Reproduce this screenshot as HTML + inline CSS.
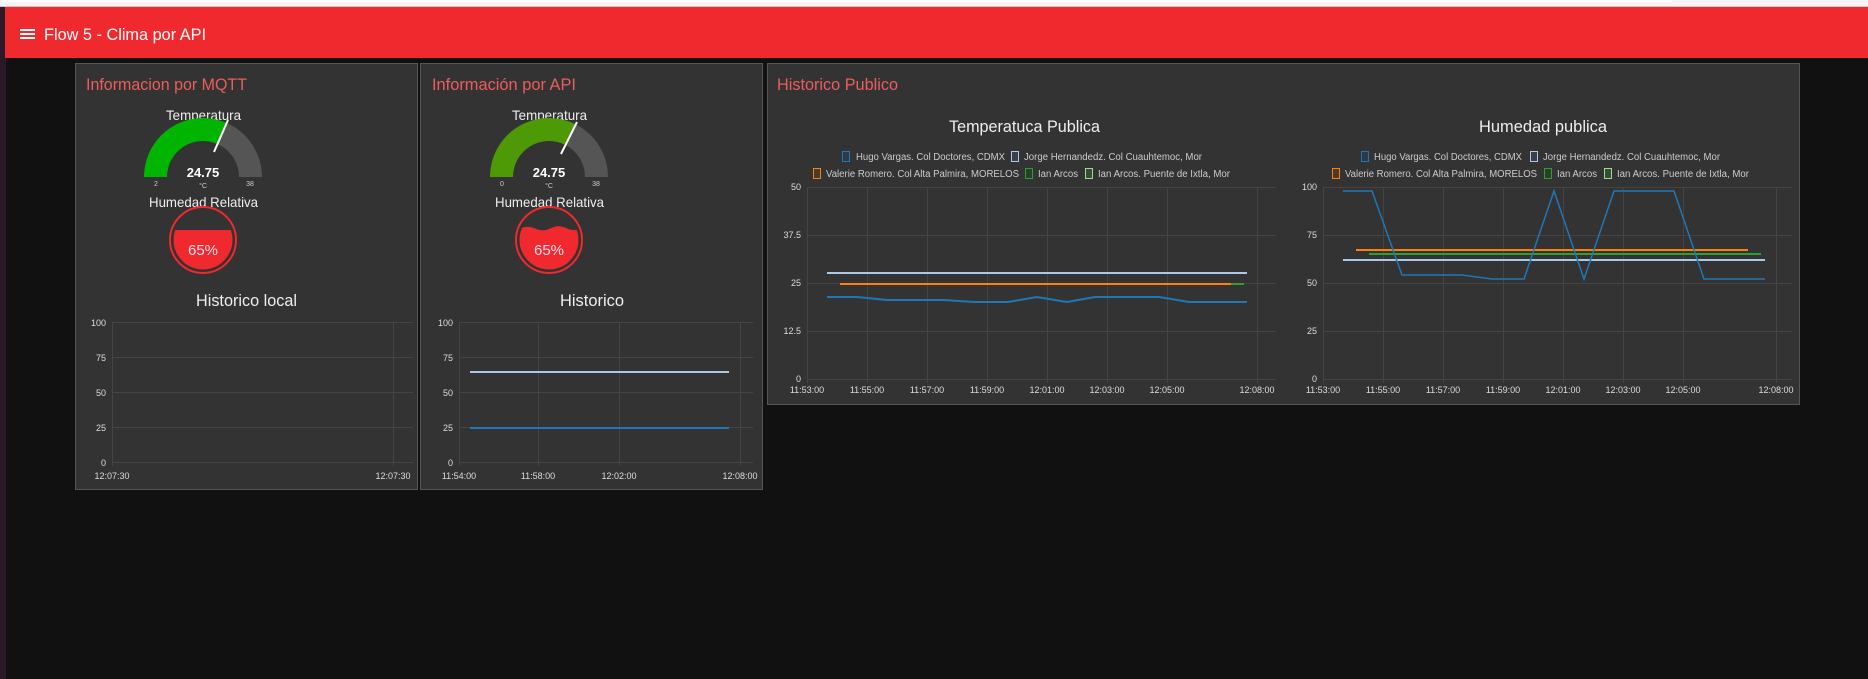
<!DOCTYPE html>
<html><head><meta charset="utf-8"><style>
html,body{margin:0;padding:0;width:1868px;height:679px;overflow:hidden;background:#111;font-family:"Liberation Sans",sans-serif}
svg{position:absolute;left:0;top:0}
</style></head><body>
<svg width="1868" height="679" viewBox="0 0 1868 679" font-family="Liberation Sans, sans-serif">
<rect x="0" y="0" width="1868" height="679" fill="#111"/>
<rect x="0" y="0" width="1868" height="7" fill="#f4f4f4"/>
<rect x="0" y="0" width="1672" height="2" fill="#fff"/>
<line x1="0" y1="6.5" x2="1868" y2="6.5" stroke="#c8c8c8"/>
<rect x="0" y="7" width="6" height="672" fill="#2a1a28"/>
<rect x="5" y="7" width="1863" height="51" fill="#ef292d"/>
<rect x="20" y="29" width="15" height="2" fill="#fff"/><rect x="20" y="33" width="15" height="2" fill="#fff"/><rect x="20" y="37" width="15" height="2" fill="#fff"/>
<text x="44" y="40" font-size="17" fill="#fff" textLength="162" lengthAdjust="spacingAndGlyphs">Flow 5 - Clima por API</text>

<rect x="75.5" y="63.5" width="342" height="426" fill="#333" stroke="#555"/>
<rect x="420.5" y="63.5" width="342" height="426" fill="#333" stroke="#555"/>
<rect x="767.5" y="63.5" width="1032" height="341" fill="#333" stroke="#555"/>
<text x="86" y="90" font-size="17" fill="#ec5d5d" textLength="161" lengthAdjust="spacingAndGlyphs">Informacion por MQTT</text>
<text x="432" y="90" font-size="17" fill="#ec5d5d" textLength="144" lengthAdjust="spacingAndGlyphs">Información por API</text>
<text x="777" y="90" font-size="17" fill="#ec5d5d" textLength="121" lengthAdjust="spacingAndGlyphs">Historico Publico</text>

<g>
<text x="166" y="120" font-size="14" fill="#eee" textLength="75" lengthAdjust="spacingAndGlyphs">Temperatura</text>
<path d="M144,177 A59,59 0 0 1 226.7,123 L217.5,144 A36,36 0 0 0 167,177 Z" fill="#00b500"/>
<path d="M226.7,123 A59,59 0 0 1 262,177 L239,177 A36,36 0 0 0 217.5,144 Z" fill="#555"/>
<line x1="214" y1="152" x2="228" y2="120" stroke="#fff" stroke-width="2"/>
<text x="203" y="177" font-size="13" font-weight="bold" fill="#fff" text-anchor="middle">24.75</text>
<text x="156" y="186" font-size="7" fill="#ccc" text-anchor="middle">2</text>
<text x="250" y="186" font-size="7" fill="#ccc" text-anchor="middle">38</text>
<text x="203" y="188" font-size="7" fill="#ccc" text-anchor="middle">°C</text>
<text x="149" y="207" font-size="14" fill="#eee" textLength="109" lengthAdjust="spacingAndGlyphs">Humedad Relativa</text>
<circle cx="203" cy="240" r="33" fill="none" stroke="#ef292d" stroke-width="2"/>
<clipPath id="c1"><circle cx="203" cy="240" r="29.5"/></clipPath>
<rect x="170" y="230" width="66" height="50" fill="#ef292d" clip-path="url(#c1)"/>
<text x="203" y="255" font-size="15" fill="#fde" text-anchor="middle">65%</text>
</g>
<g transform="translate(346,0)">
<text x="166" y="120" font-size="14" fill="#eee" textLength="75" lengthAdjust="spacingAndGlyphs">Temperatura</text>
<path d="M144,177 A59,59 0 0 1 230,124.5 L219.5,145 A36,36 0 0 0 167,177 Z" fill="#4e9a06"/>
<path d="M230,124.5 A59,59 0 0 1 262,177 L239,177 A36,36 0 0 0 219.5,145 Z" fill="#555"/>
<line x1="215" y1="154" x2="231" y2="122" stroke="#fff" stroke-width="2"/>
<text x="203" y="177" font-size="13" font-weight="bold" fill="#fff" text-anchor="middle">24.75</text>
<text x="156" y="186" font-size="7" fill="#ccc" text-anchor="middle">0</text>
<text x="250" y="186" font-size="7" fill="#ccc" text-anchor="middle">38</text>
<text x="203" y="188" font-size="7" fill="#ccc" text-anchor="middle">°C</text>
<text x="149" y="207" font-size="14" fill="#eee" textLength="109" lengthAdjust="spacingAndGlyphs">Humedad Relativa</text>
<circle cx="203" cy="240" r="33" fill="none" stroke="#ef292d" stroke-width="2"/>
<clipPath id="c2"><circle cx="203" cy="240" r="29.5"/></clipPath>
<path d="M170,230 Q180,225 188,228 Q196,232 203,229 Q212,224 220,228 Q228,232 236,228 L236,280 L170,280 Z" fill="#ef292d" clip-path="url(#c2)"/>
<text x="203" y="255" font-size="15" fill="#fde" text-anchor="middle">65%</text>
</g>

<text x="196" y="306" font-size="17" fill="#eee" textLength="101" lengthAdjust="spacingAndGlyphs">Historico local</text>
<g stroke="#444" stroke-width="1">
<line x1="112" y1="322.5" x2="413" y2="322.5"/><line x1="112" y1="357.5" x2="413" y2="357.5"/><line x1="112" y1="392.5" x2="413" y2="392.5"/><line x1="112" y1="427.5" x2="413" y2="427.5"/><line x1="112" y1="462.5" x2="413" y2="462.5"/>
<line x1="112.5" y1="322" x2="112.5" y2="466"/><line x1="393.5" y1="322" x2="393.5" y2="466"/>
</g>
<g font-size="9" fill="#ddd" text-anchor="end">
<text x="106" y="326">100</text><text x="106" y="361">75</text><text x="106" y="396">50</text><text x="106" y="431">25</text><text x="106" y="466">0</text>
</g>
<g font-size="9" fill="#ddd" text-anchor="middle"><text x="112" y="479">12:07:30</text><text x="393" y="479">12:07:30</text></g>

<text x="560" y="306" font-size="17" fill="#eee" textLength="64" lengthAdjust="spacingAndGlyphs">Historico</text>
<g stroke="#444" stroke-width="1">
<line x1="459" y1="322.5" x2="753" y2="322.5"/><line x1="459" y1="357.5" x2="753" y2="357.5"/><line x1="459" y1="392.5" x2="753" y2="392.5"/><line x1="459" y1="427.5" x2="753" y2="427.5"/><line x1="459" y1="462.5" x2="753" y2="462.5"/>
<line x1="459.5" y1="322" x2="459.5" y2="466"/><line x1="538.5" y1="322" x2="538.5" y2="466"/><line x1="619.5" y1="322" x2="619.5" y2="466"/><line x1="740.5" y1="322" x2="740.5" y2="466"/>
</g>
<g font-size="9" fill="#ddd" text-anchor="end">
<text x="453" y="326">100</text><text x="453" y="361">75</text><text x="453" y="396">50</text><text x="453" y="431">25</text><text x="453" y="466">0</text>
</g>
<g font-size="9" fill="#ddd" text-anchor="middle"><text x="459" y="479">11:54:00</text><text x="538" y="479">11:58:00</text><text x="619" y="479">12:02:00</text><text x="740" y="479">12:08:00</text></g>
<line x1="470" y1="372" x2="729" y2="372" stroke="#aec7e8" stroke-width="2"/>
<line x1="470" y1="428" x2="729" y2="428" stroke="#1f77b4" stroke-width="2"/>

<text x="949" y="132" font-size="17" fill="#eee" textLength="151" lengthAdjust="spacingAndGlyphs">Temperatuca Publica</text>
<g font-size="10" fill="#ccc" lengthAdjust="spacingAndGlyphs">
<rect x="842.5" y="151.5" width="7" height="10" fill="#2a3a48" stroke="#1f77b4"/><text x="856" y="160" textLength="149" lengthAdjust="spacingAndGlyphs">Hugo Vargas. Col Doctores, CDMX</text>
<rect x="1011.5" y="151.5" width="7" height="10" fill="#3b4048" stroke="#aec7e8"/><text x="1024" y="160" textLength="178" lengthAdjust="spacingAndGlyphs">Jorge Hernandedz. Col Cuauhtemoc, Mor</text>
<rect x="813.5" y="168.5" width="7" height="10" fill="#4a3a2a" stroke="#ff7f0e"/><text x="826" y="177" textLength="193" lengthAdjust="spacingAndGlyphs">Valerie Romero. Col Alta Palmira, MORELOS</text>
<rect x="1025.5" y="168.5" width="7" height="10" fill="#2a3f2a" stroke="#2ca02c"/><text x="1038" y="177" textLength="40" lengthAdjust="spacingAndGlyphs">Ian Arcos</text>
<rect x="1085.5" y="168.5" width="7" height="10" fill="#3a4a38" stroke="#98df8a"/><text x="1098" y="177" textLength="132" lengthAdjust="spacingAndGlyphs">Ian Arcos. Puente de Ixtla, Mor</text>
</g>
<g stroke="#444" stroke-width="1">
<line x1="807" y1="187.5" x2="1276" y2="187.5"/><line x1="807" y1="235.5" x2="1276" y2="235.5"/><line x1="807" y1="283.5" x2="1276" y2="283.5"/><line x1="807" y1="331.5" x2="1276" y2="331.5"/><line x1="807" y1="379.5" x2="1276" y2="379.5"/>
<line x1="807.5" y1="187" x2="807.5" y2="383"/><line x1="867.5" y1="187" x2="867.5" y2="383"/><line x1="927.5" y1="187" x2="927.5" y2="383"/><line x1="987.5" y1="187" x2="987.5" y2="383"/><line x1="1047.5" y1="187" x2="1047.5" y2="383"/><line x1="1107.5" y1="187" x2="1107.5" y2="383"/><line x1="1167.5" y1="187" x2="1167.5" y2="383"/><line x1="1257.5" y1="187" x2="1257.5" y2="383"/>
</g>
<g font-size="9" fill="#ddd" text-anchor="end">
<text x="801" y="190">50</text><text x="801" y="238">37.5</text><text x="801" y="286">25</text><text x="801" y="334">12.5</text><text x="801" y="382">0</text>
</g>
<g font-size="9" fill="#ddd" text-anchor="middle"><text x="807" y="393">11:53:00</text><text x="867" y="393">11:55:00</text><text x="927" y="393">11:57:00</text><text x="987" y="393">11:59:00</text><text x="1047" y="393">12:01:00</text><text x="1107" y="393">12:03:00</text><text x="1167" y="393">12:05:00</text><text x="1257" y="393">12:08:00</text></g>
<line x1="827" y1="273" x2="1247" y2="273" stroke="#aec7e8" stroke-width="2"/>
<line x1="840" y1="284" x2="1231" y2="284" stroke="#ff7f0e" stroke-width="2"/>
<line x1="1231" y1="284" x2="1244" y2="284" stroke="#2ca02c" stroke-width="2"/>
<polyline points="827,297 857,297 887,300 944,300 974,302 1008,302 1037,297 1067,302 1095,297 1159,297 1189,302 1247,302" fill="none" stroke="#1f77b4" stroke-width="2"/>

<text x="1479" y="132" font-size="17" fill="#eee" textLength="128" lengthAdjust="spacingAndGlyphs">Humedad publica</text>
<g font-size="10" fill="#ccc">
<rect x="1361.5" y="151.5" width="7" height="10" fill="#2a3a48" stroke="#1f77b4"/><text x="1374" y="160" textLength="148" lengthAdjust="spacingAndGlyphs">Hugo Vargas. Col Doctores, CDMX</text>
<rect x="1530.5" y="151.5" width="7" height="10" fill="#3b4048" stroke="#aec7e8"/><text x="1543" y="160" textLength="177" lengthAdjust="spacingAndGlyphs">Jorge Hernandedz. Col Cuauhtemoc, Mor</text>
<rect x="1332.5" y="168.5" width="7" height="10" fill="#4a3a2a" stroke="#ff7f0e"/><text x="1345" y="177" textLength="192" lengthAdjust="spacingAndGlyphs">Valerie Romero. Col Alta Palmira, MORELOS</text>
<rect x="1544.5" y="168.5" width="7" height="10" fill="#2a3f2a" stroke="#2ca02c"/><text x="1557" y="177" textLength="40" lengthAdjust="spacingAndGlyphs">Ian Arcos</text>
<rect x="1604.5" y="168.5" width="7" height="10" fill="#3a4a38" stroke="#98df8a"/><text x="1617" y="177" textLength="132" lengthAdjust="spacingAndGlyphs">Ian Arcos. Puente de Ixtla, Mor</text>
</g>
<g stroke="#444" stroke-width="1">
<line x1="1323" y1="187.5" x2="1792" y2="187.5"/><line x1="1323" y1="235.5" x2="1792" y2="235.5"/><line x1="1323" y1="283.5" x2="1792" y2="283.5"/><line x1="1323" y1="331.5" x2="1792" y2="331.5"/><line x1="1323" y1="379.5" x2="1792" y2="379.5"/>
<line x1="1323.5" y1="187" x2="1323.5" y2="383"/><line x1="1383.5" y1="187" x2="1383.5" y2="383"/><line x1="1443.5" y1="187" x2="1443.5" y2="383"/><line x1="1503.5" y1="187" x2="1503.5" y2="383"/><line x1="1563.5" y1="187" x2="1563.5" y2="383"/><line x1="1623.5" y1="187" x2="1623.5" y2="383"/><line x1="1683.5" y1="187" x2="1683.5" y2="383"/><line x1="1776.5" y1="187" x2="1776.5" y2="383"/>
</g>
<g font-size="9" fill="#ddd" text-anchor="end">
<text x="1317" y="190">100</text><text x="1317" y="238">75</text><text x="1317" y="286">50</text><text x="1317" y="334">25</text><text x="1317" y="382">0</text>
</g>
<g font-size="9" fill="#ddd" text-anchor="middle"><text x="1323" y="393">11:53:00</text><text x="1383" y="393">11:55:00</text><text x="1443" y="393">11:57:00</text><text x="1503" y="393">11:59:00</text><text x="1563" y="393">12:01:00</text><text x="1623" y="393">12:03:00</text><text x="1683" y="393">12:05:00</text><text x="1776" y="393">12:08:00</text></g>
<line x1="1356" y1="250" x2="1748" y2="250" stroke="#ff7f0e" stroke-width="2"/>
<line x1="1369" y1="254" x2="1761" y2="254" stroke="#2ca02c" stroke-width="2"/>
<line x1="1343" y1="260" x2="1765" y2="260" stroke="#aec7e8" stroke-width="2"/>
<polyline points="1343,191 1372,191 1402,275 1462,275 1492,279 1524,279 1554,191 1584,279 1614,191 1674,191 1704,279 1765,279" fill="none" stroke="#1f77b4" stroke-width="1.5"/>
</svg>
</body></html>
